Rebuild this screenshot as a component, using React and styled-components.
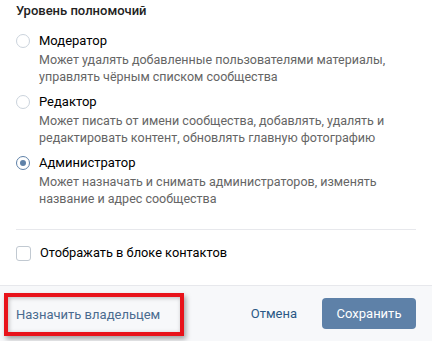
import styled, { createGlobalStyle } from 'styled-components';

const GlobalStyle = createGlobalStyle`
  body {
    margin: 0;
    background: #fff;
    font-family: Roboto, "Open Sans", "DejaVu Sans", sans-serif;
    -webkit-font-smoothing: antialiased;
  }
`;

const roles = [
    {
        id: 'moderator',
        title: 'Модератор',
        text: 'Может удалять добавленные пользователями материалы, управлять чёрным списком сообщества',
    },
    {
        id: 'editor',
        title: 'Редактор',
        text: 'Может писать от имени сообщества, добавлять, удалять и редактировать контент, обновлять главную фотографию',
    },
    {
        id: 'admin',
        title: 'Администратор',
        text: 'Может назначать и снимать администраторов, изменять название и адрес сообщества',
    },
];

const App = () => {
    const selected = 'admin';
    return (
    <Box>
        <GlobalStyle />
        <Body>
            <Heading>Уровень полномочий</Heading>
            <Options>
                {roles.map((r) => (
                    <Option key={r.id}>
                        <Radio checked={r.id === selected} />
                        <OptionText>
                            <Label>{r.title}</Label>
                            <Description>{r.text}</Description>
                        </OptionText>
                    </Option>
                ))}
            </Options>
            <Separator />
            <CheckRow>
                <Checkbox />
                <Label $small>Отображать в блоке контактов</Label>
            </CheckRow>
        </Body>
        <Footer>
            <Highlight>
                <FooterLink>Назначить владельцем</FooterLink>
            </Highlight>
            <Actions>
                <FooterLink $dark>Отмена</FooterLink>
                <SaveButton>Сохранить</SaveButton>
            </Actions>
        </Footer>
    </Box>
)};

const Box = styled.div`
    width: 432px;
    height: 341px;
    display: flex;
    flex-direction: column;
    overflow: hidden;
`;

const Body = styled.div`
    flex: 1;
    padding: 2px 16px 0 16px;
`;

const Heading = styled.div`
    font-size: 13px;
    line-height: 18px;
    font-weight: 500;
    color: #222;
`;

const Options = styled.div`
    display: flex;
    flex-direction: column;
    gap: 8px;
    margin-top: 12px;
`;

const Option = styled.div`
    display: flex;
    align-items: flex-start;
    gap: 9px;
`;

const Radio = styled.span`
    flex: none;
    box-sizing: border-box;
    width: 14px;
    height: 14px;
    margin-top: 2px;
    border-radius: 50%;
    border: 1px solid ${(p) => (p.checked ? '#5e81a8' : '#cbd3dc')};
    background: #fff;
    display: flex;
    align-items: center;
    justify-content: center;
    &::after {
        content: '';
        display: ${(p) => (p.checked ? 'block' : 'none')};
        width: 6px;
        height: 6px;
        border-radius: 50%;
        background: #5e81a8;
    }
`;

const OptionText = styled.div`
    display: flex;
    flex-direction: column;
    gap: 1px;
`;

const Label = styled.div`
    font-size: ${(p) => (p.$small ? '12.8px' : '13px')};
    line-height: 18px;
    color: #000;
`;

const Description = styled.div`
    font-size: 12.5px;
    line-height: 17px;
    color: #656565;
    max-width: 370px;
`;

const Separator = styled.div`
    height: 1px;
    background: #e7e8ec;
    margin: 22px 0 14px;
`;

const CheckRow = styled.div`
    display: flex;
    align-items: center;
    gap: 9px;
`;

const Checkbox = styled.span`
    box-sizing: border-box;
    width: 15px;
    height: 15px;
    border: 1px solid #c1c9d1;
    border-radius: 3px;
    background: #fff;
`;

const Footer = styled.div`
    height: 56px;
    flex: none;
    box-sizing: border-box;
    border-top: 1px solid #e7e8ec;
    background: #f7f8fa;
    padding: 0 16px;
    display: flex;
    align-items: center;
    justify-content: space-between;
`;

const Highlight = styled.div`
    margin-left: -12px;
    margin-top: 1px;
    height: 43px;
    box-sizing: border-box;
    padding: 0 20px 0 8px;
    border: 4px solid #e8121a;
    box-shadow: 2px 3px 5px rgba(0, 0, 0, 0.35), inset 1px 1px 4px rgba(0, 0, 0, 0.25);
    display: flex;
    align-items: center;
`;

const FooterLink = styled.span`
    font-size: 13px;
    color: ${(p) => (p.$dark ? '#2a5885' : '#4a6b8f')};
    cursor: pointer;
`;

const Actions = styled.div`
    display: flex;
    align-items: center;
    gap: 25px;
`;

const SaveButton = styled.button`
    width: 94px;
    height: 31px;
    border: none;
    border-radius: 4px;
    background: #5e81a8;
    color: #fff;
    font-family: inherit;
    font-size: 13px;
    cursor: pointer;
`;

export default App;
